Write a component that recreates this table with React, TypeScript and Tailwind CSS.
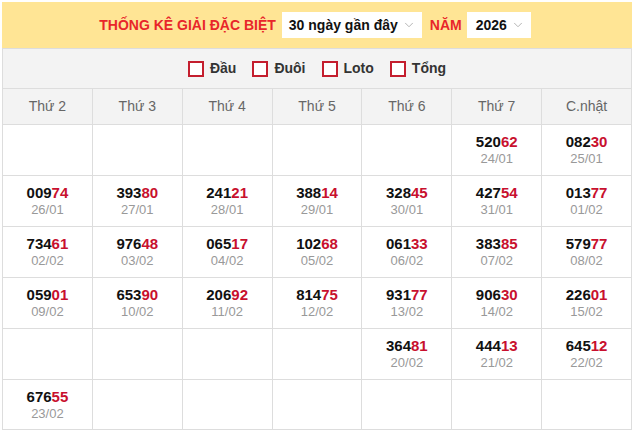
import { ChevronDown } from 'lucide-react';

type Cell = { num: string; date: string } | null;

const days = ['Thứ 2', 'Thứ 3', 'Thứ 4', 'Thứ 5', 'Thứ 6', 'Thứ 7', 'C.nhật'];

const rows: Cell[][] = [
  [null, null, null, null, null, { num: '52062', date: '24/01' }, { num: '08230', date: '25/01' }],
  [
    { num: '00974', date: '26/01' },
    { num: '39380', date: '27/01' },
    { num: '24121', date: '28/01' },
    { num: '38814', date: '29/01' },
    { num: '32845', date: '30/01' },
    { num: '42754', date: '31/01' },
    { num: '01377', date: '01/02' },
  ],
  [
    { num: '73461', date: '02/02' },
    { num: '97648', date: '03/02' },
    { num: '06517', date: '04/02' },
    { num: '10268', date: '05/02' },
    { num: '06133', date: '06/02' },
    { num: '38385', date: '07/02' },
    { num: '57977', date: '08/02' },
  ],
  [
    { num: '05901', date: '09/02' },
    { num: '65390', date: '10/02' },
    { num: '20692', date: '11/02' },
    { num: '81475', date: '12/02' },
    { num: '93177', date: '13/02' },
    { num: '90630', date: '14/02' },
    { num: '22601', date: '15/02' },
  ],
  [null, null, null, null, { num: '36481', date: '20/02' }, { num: '44413', date: '21/02' }, { num: '64512', date: '22/02' }],
  [{ num: '67655', date: '23/02' }, null, null, null, null, null, null],
];

const filters = ['Đầu', 'Đuôi', 'Loto', 'Tổng'];

export default function App() {
  return (
    <div className="pl-[2px] pt-[2px] bg-white font-['Liberation_Sans',Arial,sans-serif]">
      <div className="w-[630px]">
        {/* Header */}
        <div className="h-[46px] bg-[#ffe595] flex items-center justify-center pr-[4px]">
          <span className="text-[#e8262a] font-bold text-[14px] mr-[6px] whitespace-nowrap">THỐNG KÊ GIẢI ĐẶC BIỆT</span>
          <div className="h-[26px] w-[140px] bg-white flex items-center pl-[7px] pr-[6px]">
            <span className="text-[14px] font-bold text-[#111] flex-1 whitespace-nowrap">30 ngày gần đây</span>
            <ChevronDown size={14} strokeWidth={1.5} className="text-[#aaa]" />
          </div>
          <span className="text-[#e8262a] font-bold text-[14px] ml-[8px] mr-[5px]">NĂM</span>
          <div className="h-[26px] w-[64px] bg-white flex items-center pl-[9px] pr-[6px]">
            <span className="text-[14px] font-bold text-[#111] flex-1">2026</span>
            <ChevronDown size={14} strokeWidth={1.5} className="text-[#aaa]" />
          </div>
        </div>

        {/* Filters */}
        <div className="h-[40px] bg-[#f3f3f3] border-x border-t border-[#ddd] flex items-center justify-center gap-[16px]">
          {filters.map((f) => (
            <label key={f} className="flex items-center gap-[6px]">
              <span className="w-[16px] h-[16px] border-2 border-[#c41e2e] bg-white" />
              <span className="text-[14px] font-bold text-[#333]">{f}</span>
            </label>
          ))}
        </div>

        {/* Table */}
        <div className="grid grid-cols-7 border-l border-[#ddd]">
          {days.map((d) => (
            <div
              key={d}
              className="h-[36px] bg-[#f3f3f3] border-t border-r border-[#ddd] flex items-center justify-center text-[14px] text-[#666]"
            >
              {d}
            </div>
          ))}
          {rows.flat().map((c, i) => (
            <div
              key={i}
              className="h-[51px] border-t border-r border-[#ddd] flex flex-col items-center justify-center leading-[17px] nth-last-[-n+7]:border-b"
            >
              {c && (
                <>
                  <span className="text-[15px] font-bold text-[#111]">
                    {c.num.slice(0, 3)}
                    <span className="text-[#c8102e]">{c.num.slice(3)}</span>
                  </span>
                  <span className="text-[13px] text-[#999]">{c.date}</span>
                </>
              )}
            </div>
          ))}
        </div>
      </div>
    </div>
  );
}
